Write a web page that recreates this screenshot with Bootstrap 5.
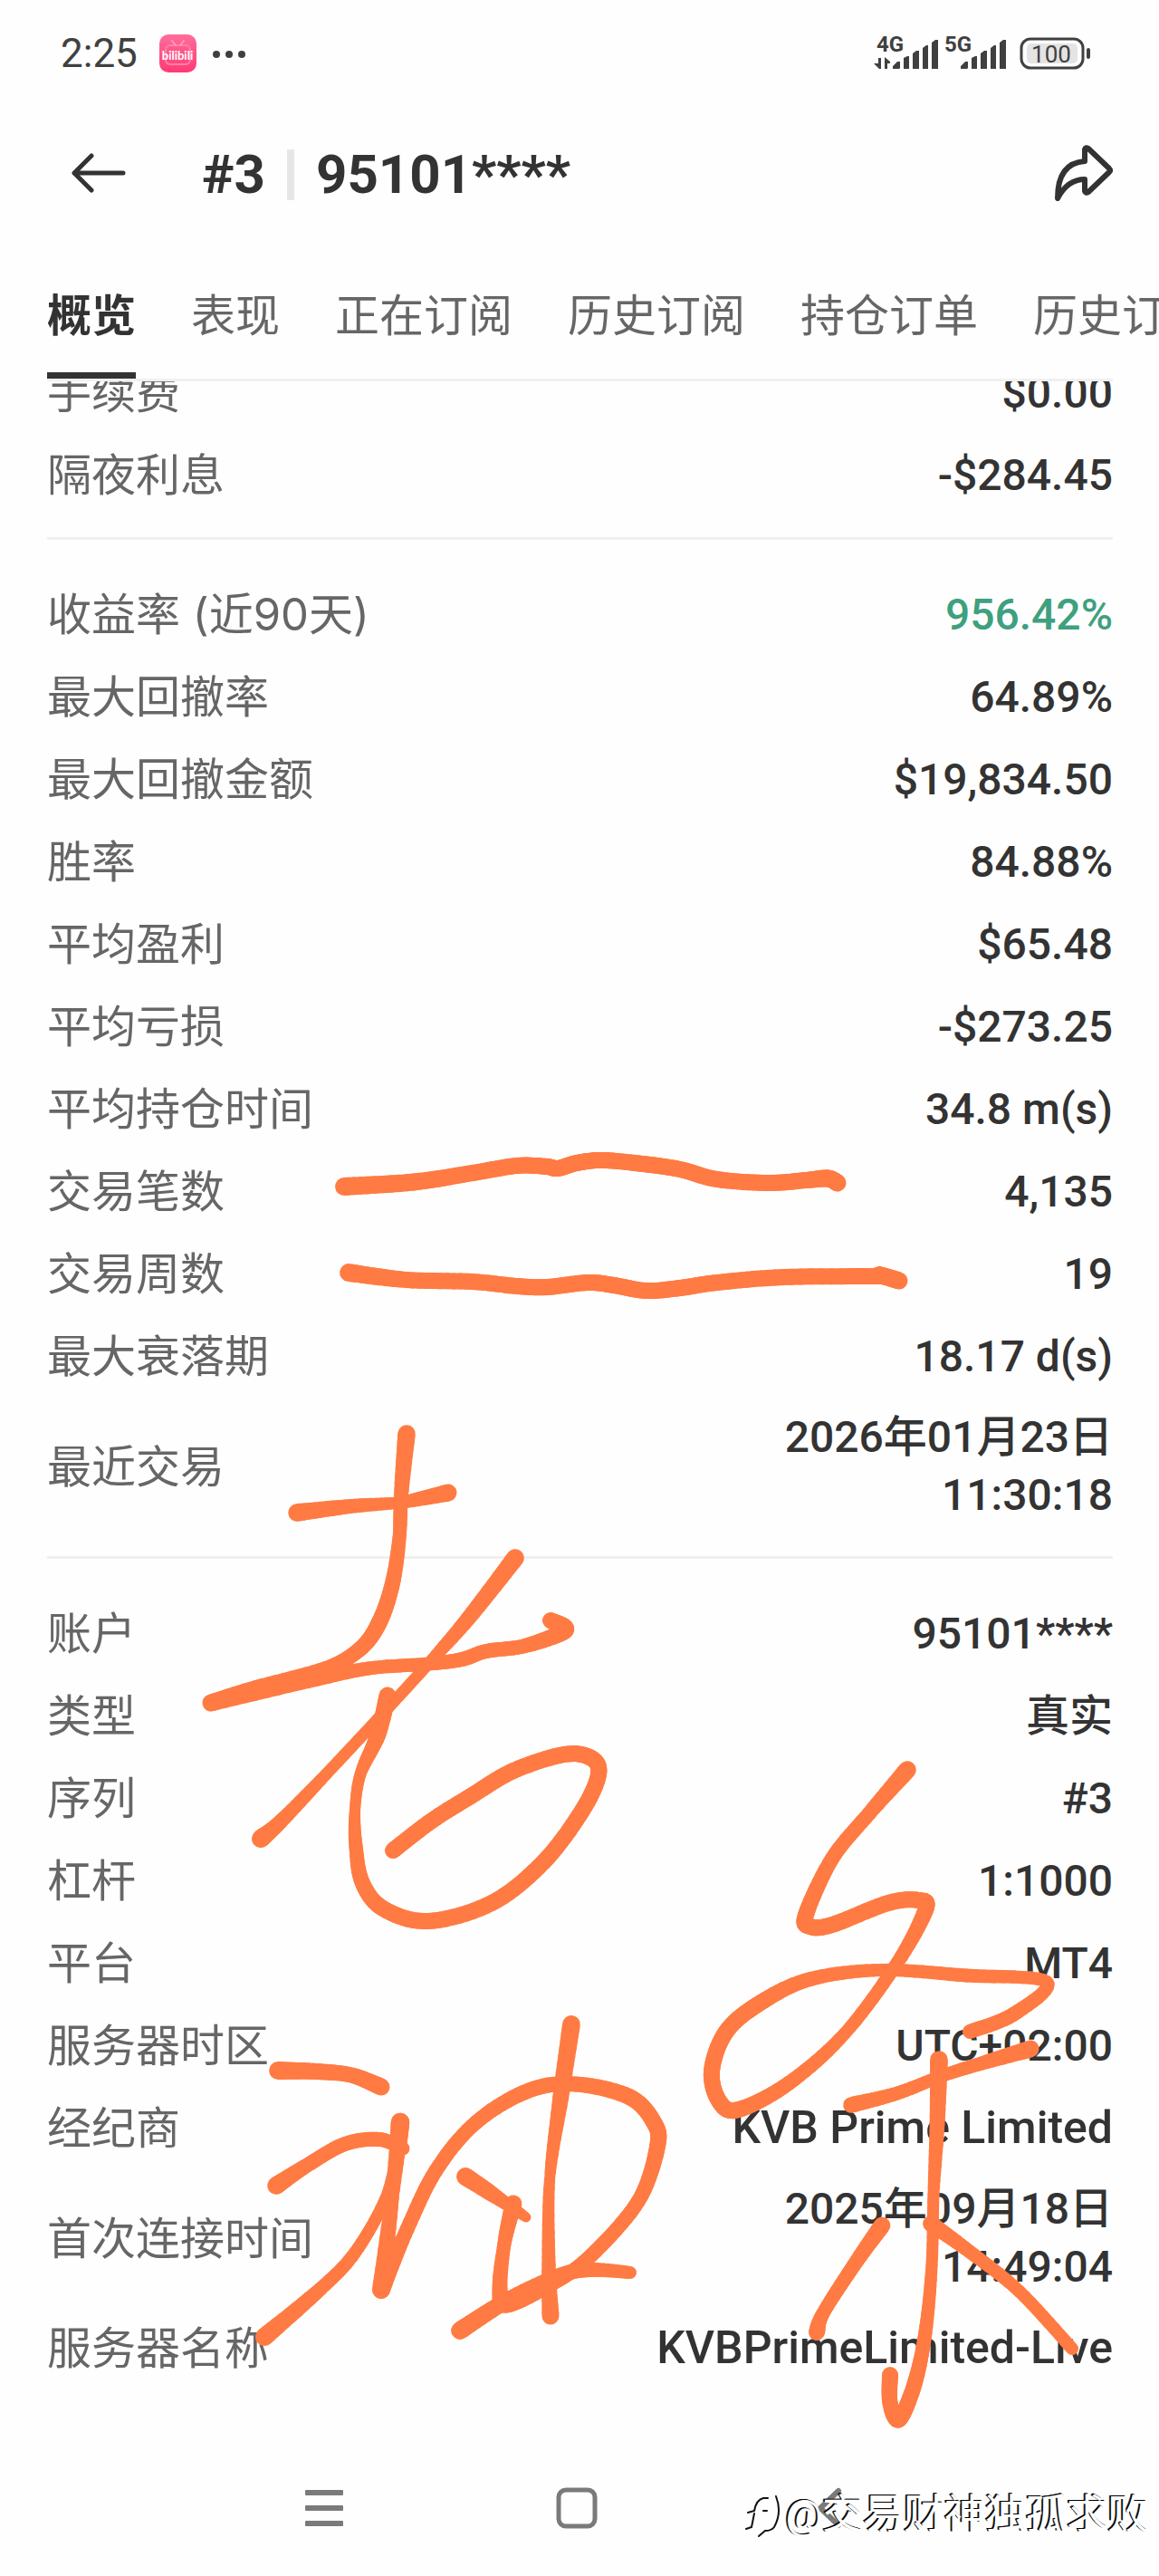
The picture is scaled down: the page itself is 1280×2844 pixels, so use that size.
<!DOCTYPE html>
<html lang="zh-CN">
<head>
<meta charset="utf-8">
<meta name="viewport" content="width=device-width, initial-scale=1">
<title>#3 | 95101****</title>
<link href="https://cdn.jsdelivr.net/npm/bootstrap@5.3.0/dist/css/bootstrap.min.css" rel="stylesheet">
<style>
  :root { --ink: #333; --soft: #666; --line: #f0f0f0; --pen: #ff7b43; --left: 52px; --right: 51px; }
  body { font-family: Roboto, "Noto Sans CJK SC", sans-serif; color: var(--ink); background: #fefefe; overflow-x: hidden; }
  .status-bar { height: 118px; padding: 0 75px 0 67px; color: #404040; }
  .clock { font-size: 44px; line-height: 52px; }
  .net-name { font: 700 24px/24px Roboto, sans-serif; }
  .title-bar { height: 146px; padding: 0 var(--right) 0 79px; }
  .icon-btn { border: 0; background: none; padding: 0; line-height: 0; color: var(--ink); }
  .acct-title { font-size: 60px; line-height: 72px; font-weight: 700; margin: 4px 0 0 84px; }
  .title-rule { width: 8px; height: 56px; background: #e6e6e6; margin: 0 24px; }
  .tab-strip { margin: 0 var(--right) 0 var(--left); height: 157px; border-bottom: 3px solid var(--line); gap: 61px; padding-top: 50px; font-size: 49px; line-height: 72px; }
  .tab-wrap { overflow: hidden; }
  .tab-strip a { color: var(--soft); text-decoration: none; white-space: nowrap; border-bottom: 7px solid transparent; }
  .tab-strip a.current { color: var(--ink); font-weight: 700; border-color: var(--ink); }
  .panel { padding: 0 var(--right) 0 var(--left); overflow: hidden; }
  .figures { margin: 0; padding: 37px 0 23px; border-bottom: 3px solid var(--line); font-size: 49px; }
  .figures:first-child { margin-top: -70px; }
  .figures:last-child { border: 0; }
  .figure-row { padding: 12px 0; line-height: 67px; }
  .figure-row dt { font-family: Inter, "Noto Sans CJK SC", sans-serif; font-weight: 400; color: var(--soft); }
  .figure-row dd { margin: 0; font-weight: 500; font-size: 48px; text-align: right; }
  .figure-row dd.two-line { line-height: 64px; }
  .figure-row dd.wide-name { font-size: 50px; }
  .gain { color: #3fa07f; }
  .soft-keys { padding: 85px 0 0 337px; height: 189px; gap: 235px; }
  .pen-layer { position: absolute; left: 0; top: 0; pointer-events: none; }
  .stamp { position: absolute; right: 12px; bottom: 43px; font-size: 45px; line-height: 60px; color: #fff; text-shadow: -1px -1px 0 #000, -2px -1px 0 #222; pointer-events: none; gap: 3px; }
</style>
<script src="https://cdn.jsdelivr.net/npm/bootstrap@5.3.0/dist/js/bootstrap.bundle.min.js"></script>
</head>
<body class="position-relative">
<header>
  <div class="status-bar d-flex align-items-center justify-content-between">
    <div class="d-flex align-items-center">
      <span class="clock">2:25</span>
      <svg class="ms-4" width="96" height="42" viewBox="0 0 96 42" aria-label="bilibili">
        <defs><linearGradient id="pk" x2="0" y2="1"><stop stop-color="#ff6d9b"/><stop offset="1" stop-color="#ff3a74"/></linearGradient></defs>
        <rect width="41" height="42" rx="10" fill="url(#pk)"/>
        <rect x="7" y="12" width="27" height="21" rx="5" fill="none" stroke="#ff7fa8" stroke-width="2"/>
        <path d="M14 7l4 5M27 7l-4 5" stroke="#ff9dbd" stroke-width="2" stroke-linecap="round"/>
        <text x="20" y="28" text-anchor="middle" font-family="Lato" font-weight="700" font-size="13" fill="#fff">bilibili</text>
        <g fill="#404040"><circle cx="63" cy="22" r="4"/><circle cx="77" cy="22" r="4"/><circle cx="91" cy="22" r="4"/></g>
      </svg>
    </div>
    <svg width="240" height="64" viewBox="966 26 240 64" fill="#404040">
      <text x="969" y="56" class="net-name">4G</text>
      <path d="M971 63h3v12h-2l-6-6h5zM978 75V62l6 5v2h-3v6z"/>
      <g id="bars"><path d="M987 75v-3l5-5h3v7l-1 1zM999 75V63l4-2h2v14zM1009 75V58l4-3h3v20zM1020 75V52l4-3h2v26zM1030 75V46l4-3h3v32z"/></g>
      <text x="1044" y="56" class="net-name">5G</text>
      <use href="#bars" x="75"/>
      <rect x="1129" y="42" width="68" height="32" rx="10" fill="none" stroke="#404040" stroke-width="3"/>
      <rect x="1135" y="47" width="56" height="22" rx="5" fill="#e4e4e4"/>
      <text x="1162" y="68" text-anchor="middle" font-family="Roboto" font-size="26">100</text>
      <rect x="1201" y="52" width="4" height="12" rx="2"/>
    </svg>
  </div>
  <div class="title-bar d-flex align-items-center">
    <button class="icon-btn" type="button" aria-label="返回">
      <svg width="60" height="44" viewBox="0 0 60 44" fill="none" stroke="currentColor" stroke-width="5" stroke-linecap="round" stroke-linejoin="round"><path d="M22 3L3 22l19 19M3 22h54"/></svg>
    </button>
    <h1 class="acct-title d-flex align-items-center mb-0"><span>#3</span><span class="title-rule"></span><span>95101****</span></h1>
    <button class="icon-btn ms-auto" type="button" aria-label="分享">
      <svg width="64" height="62" viewBox="0 0 64 62" fill="none" stroke="currentColor" stroke-width="6" stroke-linejoin="round" stroke-linecap="round"><path d="M33 18V5q1-3 4-1l23 22q2 2 0 4L37 52q-3 2-4-1V38Q14 38 3 59Q3 20 33 18z"/></svg>
    </button>
  </div>
  <div class="tab-wrap">
    <nav class="tab-strip d-flex">
      <a class="current" href="#" aria-current="page">概览</a><a href="#">表现</a><a href="#">正在订阅</a><a href="#">历史订阅</a><a href="#">持仓订单</a><a href="#">历史订单</a>
    </nav>
  </div>
</header>

<main class="panel">
  <dl class="figures">
    <div class="figure-row d-flex justify-content-between align-items-center"><dt>手续费</dt><dd>$0.00</dd></div>
    <div class="figure-row d-flex justify-content-between align-items-center"><dt>隔夜利息</dt><dd>-$284.45</dd></div>
  </dl>
  <dl class="figures">
    <div class="figure-row d-flex justify-content-between align-items-center"><dt>收益率 (近90天)</dt><dd class="gain">956.42%</dd></div>
    <div class="figure-row d-flex justify-content-between align-items-center"><dt>最大回撤率</dt><dd>64.89%</dd></div>
    <div class="figure-row d-flex justify-content-between align-items-center"><dt>最大回撤金额</dt><dd>$19,834.50</dd></div>
    <div class="figure-row d-flex justify-content-between align-items-center"><dt>胜率</dt><dd>84.88%</dd></div>
    <div class="figure-row d-flex justify-content-between align-items-center"><dt>平均盈利</dt><dd>$65.48</dd></div>
    <div class="figure-row d-flex justify-content-between align-items-center"><dt>平均亏损</dt><dd>-$273.25</dd></div>
    <div class="figure-row d-flex justify-content-between align-items-center"><dt>平均持仓时间</dt><dd>34.8 m(s)</dd></div>
    <div class="figure-row d-flex justify-content-between align-items-center"><dt>交易笔数</dt><dd>4,135</dd></div>
    <div class="figure-row d-flex justify-content-between align-items-center"><dt>交易周数</dt><dd>19</dd></div>
    <div class="figure-row d-flex justify-content-between align-items-center"><dt>最大衰落期</dt><dd>18.17 d(s)</dd></div>
    <div class="figure-row d-flex justify-content-between align-items-center"><dt>最近交易</dt><dd class="two-line">2026年01月23日<br>11:30:18</dd></div>
  </dl>
  <dl class="figures">
    <div class="figure-row d-flex justify-content-between align-items-center"><dt>账户</dt><dd>95101****</dd></div>
    <div class="figure-row d-flex justify-content-between align-items-center"><dt>类型</dt><dd>真实</dd></div>
    <div class="figure-row d-flex justify-content-between align-items-center"><dt>序列</dt><dd>#3</dd></div>
    <div class="figure-row d-flex justify-content-between align-items-center"><dt>杠杆</dt><dd>1:1000</dd></div>
    <div class="figure-row d-flex justify-content-between align-items-center"><dt>平台</dt><dd>MT4</dd></div>
    <div class="figure-row d-flex justify-content-between align-items-center"><dt>服务器时区</dt><dd>UTC+02:00</dd></div>
    <div class="figure-row d-flex justify-content-between align-items-center"><dt>经纪商</dt><dd class="wide-name">KVB Prime Limited</dd></div>
    <div class="figure-row d-flex justify-content-between align-items-center"><dt>首次连接时间</dt><dd class="two-line">2025年09月18日<br>14:49:04</dd></div>
    <div class="figure-row d-flex justify-content-between align-items-center"><dt>服务器名称</dt><dd class="wide-name">KVBPrimeLimited-Live</dd></div>
  </dl>
</main>

<footer class="soft-keys d-flex align-items-start">
  <button class="icon-btn" type="button" aria-label="菜单"><svg width="42" height="46" viewBox="0 0 42 46" fill="#7a7a7a"><rect y="3" width="42" height="6" rx="1"/><rect y="20" width="42" height="6" rx="1"/><rect y="37" width="42" height="6" rx="1"/></svg></button>
  <button class="icon-btn" type="button" aria-label="主页"><svg width="46" height="46" viewBox="0 0 46 46" fill="none" stroke="#7a7a7a" stroke-width="5"><rect x="3" y="3" width="40" height="40" rx="8"/></svg></button>
  <button class="icon-btn" type="button" aria-label="后退"><svg width="46" height="46" viewBox="0 0 46 46" fill="none" stroke="#7a7a7a" stroke-width="6" stroke-linecap="round"><path d="M31 4L11 23l20 19"/></svg></button>
</footer>

<svg class="pen-layer" id="pen" width="1280" height="2844" viewBox="0 0 1280 2844" stroke="#ff7b43" stroke-linecap="round" fill="none" aria-hidden="true"></svg>

<div class="stamp d-flex align-items-center">
  <svg width="44" height="50" viewBox="0 0 44 50" fill="none" stroke="#111" stroke-width="2" stroke-linecap="round" aria-hidden="true"><path d="M27 6h-5Q14 8 12 20l-7 2M12 23L9 38l-6 2M22 20h4M36 4q7 18-2 34-3 4-10 4l-7 6"/></svg>
  <span>@交易财神独孤求败</span>
</div>

<script>
// Freehand strokes: x, y and an optional pen width at that point.
const strokes = [
  [[380,1310,19],[457,1305,18],[522,1295],[571,1287],[604,1288],[616,1290],[637,1284],[665,1281],[710,1285],[751,1291],[792,1302],[849,1306],[890,1303],[914,1301,18],[925,1306,18]],
  [[385,1405,19],[449,1413],[522,1415],[571,1420],[604,1421],[649,1416],[678,1419],[714,1425],[751,1422],[792,1416],[865,1410],[963,1409],[972,1408,18],[993,1414,18]],
  [[328,1670,19],[387,1663,15],[440,1659,12],[467,1654,15],[495,1648,18]],
  [[449,1583,19],[443,1651,15],[441,1698,14],[433,1750,16],[418,1793],[397,1821,16],[360,1842,15],[283,1864,17],[233,1880,18]],
  [[233,1880,18],[340,1856,15],[407,1842,14],[473,1837,14],[510,1832,15],[537,1823,15],[580,1817,15],[624,1800,18],[608,1789,17]],
  [[569,1720,19],[517,1787,16],[473,1837,12],[430,1884,12],[360,1959,12],[310,2011,15],[288,2030,19]],
  [[428,1872,18],[417,1916],[398,1959,12],[392,1999,11],[393,2038,14],[400,2078,16],[423,2107],[473,2121],[543,2101],[600,2056],[643,1999],[661,1959],[653,1941],[623,1937],[567,1955],[520,1983],[477,2010],[434,2043]],
  [[1002,1954,19],[960,2002,15],[919,2052,15],[890,2114],[895,2127],[919,2125],[981,2101],[1015,2098],[1022,2109],[991,2167,14],[933,2245,13],[871,2300,15],[816,2329],[795,2321],[786,2287],[802,2243],[840,2211],[895,2185,15],[974,2175,13],[1067,2181,14],[1156,2188,13],[1119,2224,15],[1071,2243,15]],
  [[940,2324],[991,2311,14],[1040,2292,13],[1084,2278,14],[1138,2262,18]],
  [[1037,2274,19],[1035,2345,16],[1031,2423,12],[1029,2501,12],[1022,2575,14],[1010,2632,16],[993,2671,17],[983,2653,16],[983,2622,17]],
  [[974,2457,18],[943,2501,15],[909,2554,14],[902,2575]],
  [[1028,2455],[1071,2486,14],[1126,2530,13],[1184,2593,13]],
  [[307,2286,19],[350,2287],[388,2291,16],[421,2304,18]],
  [[305,2413,19],[340,2390,15],[381,2367,15],[419,2362,15],[445,2372,14]],
  [[442,2343,20],[440,2373,15],[426,2427,12],[392,2487,13],[354,2527,14],[292,2580,19]],
  [[442,2343,20],[433,2427,14],[421,2528,19]],
  [[421,2528,19],[447,2467,15],[481,2397,15],[526,2343,15],[584,2308,16],[636,2301,16],[695,2315],[722,2343],[726,2370],[705,2430,15],[653,2490,15],[612,2520,15],[560,2545,16],[552,2527,16],[557,2477,14],[567,2433,18]],
  [[514,2403,19],[540,2420],[581,2448,10]],
  [[508,2573,19],[560,2540],[619,2512,16],[653,2506,15],[696,2509,13]],
  [[631,2235,19],[619,2317,17],[607,2407,11],[606,2500,14],[608,2557,18]]
];
const cr = (a, b, c, d, t) => (2*b + (c-a)*t + (2*a-5*b+4*c-d)*t*t + (3*b-a-3*c+d)*t*t*t) / 2;
let out = "";
for (const s of strokes) {
  const at = i => { const p = s[Math.max(0, Math.min(s.length-1, i))]; return [p[0], p[1], p[2] || 17]; };
  let prev = at(0);
  for (let i = 0; i < s.length-1; i++)
    for (let k = 1; k <= 10; k++) {
      const q = [0,1].map(j => cr(at(i-1)[j], at(i)[j], at(i+1)[j], at(i+2)[j], k/10).toFixed(1));
      q.push((at(i)[2] + (at(i+1)[2]-at(i)[2])*k/10 + 1).toFixed(1));
      out += `<path d="M${prev[0]} ${prev[1]}L${q[0]} ${q[1]}" stroke-width="${q[2]}"/>`;
      prev = q;
    }
}
document.getElementById("pen").innerHTML = out;
</script>
</body>
</html>
